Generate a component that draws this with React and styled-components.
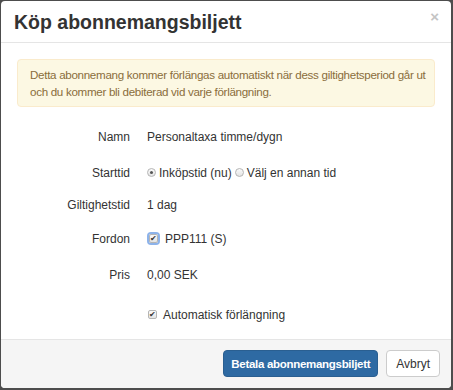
import styled, { createGlobalStyle } from 'styled-components';

const Global = createGlobalStyle`
  html, body {
    margin: 0;
    padding: 0;
    background: #4d4d4d;
    font-family: "Liberation Sans", Arial, sans-serif;
  }
`;

const Frame = styled.div`
  width: 453px;
  height: 390px;
  padding: 1px 2px 2px 1px;
  box-sizing: border-box;
`;

const Modal = styled.div`
  width: 450px;
  height: 387px;
  background: #fff;
  border-radius: 4px;
  overflow: hidden;
  display: flex;
  flex-direction: column;
`;

const Header = styled.div`
  height: 42px;
  padding: 2px 12px 0 13px;
  box-sizing: border-box;
  border-bottom: 1px solid #e5e5e5;
  display: flex;
  align-items: center;
  justify-content: space-between;
`;

const Title = styled.h4`
  margin: 0;
  font-size: 19.5px;
  font-weight: 700;
  color: #333;
`;

const Close = styled.span`
  font-size: 15px;
  font-weight: 700;
  color: #c4c4c4;
  margin-top: -11px;
`;

const Body = styled.div`
  flex: 1;
  padding: 16px 16px 0;
`;

const Alert = styled.div`
  background: #fcf8e3;
  border: 1px solid #faebcc;
  border-radius: 4px;
  color: #8a6d3b;
  font-size: 11.6px;
  letter-spacing: -0.3px;
  line-height: 17px;
  padding: 6px 6px 6px 12px;
  margin-bottom: 12px;
`;

const Row = styled.div`
  height: ${p => p.h}px;
  display: flex;
  align-items: center;
  font-size: 12px;
  color: #333;
`;

const Label = styled.div`
  width: 113px;
  text-align: right;
  padding-right: 17px;
`;

const Value = styled.div`
  display: flex;
  align-items: center;
`;

const Radio = styled.span`
  width: 9px;
  height: 9px;
  border-radius: 50%;
  border: 1px solid #b5b5b5;
  background: linear-gradient(#fafafa, #e4e4e4);
  box-sizing: border-box;
  display: inline-flex;
  align-items: center;
  justify-content: center;
  margin: 0 3px 0 ${p => (p.checked ? 0 : 3)}px;
  &::after {
    content: '';
    width: 3px;
    height: 3px;
    border-radius: 50%;
    background: ${p => (p.checked ? '#555' : 'transparent')};
  }
`;

const Check = styled.span`
  width: 9px;
  height: 9px;
  border: 1px solid #b5b5b5;
  border-radius: 2px;
  background: linear-gradient(#fafafa, #e4e4e4);
  box-sizing: border-box;
  display: inline-flex;
  align-items: center;
  justify-content: center;
  font-size: 8px;
  line-height: 1;
  color: #333;
  margin: ${p => (p.focus ? '0 7px 0 2px' : '0 6px 0 1px')};
  box-shadow: ${p => (p.focus ? '0 0 0 2px #8db3ea' : 'none')};
`;

const Footer = styled.div`
  height: 49px;
  background: #f5f5f5;
  border-top: 1px solid #e5e5e5;
  display: flex;
  align-items: center;
  justify-content: flex-end;
  gap: 8px;
  padding: 0 11px 0 0;
`;

const Button = styled.button`
  height: 27px;
  padding: 0 ${p => (p.primary ? 7 : 9)}px;
  font-family: inherit;
  font-size: ${p => (p.primary ? 11.5 : 12)}px;
  font-weight: ${p => (p.primary ? 700 : 400)};
  letter-spacing: ${p => (p.primary ? '-0.3px' : '0')};
  border-radius: 4px;
  border: 1px solid ${p => (p.primary ? '#2a5f91' : '#ccc')};
  background: ${p => (p.primary ? '#2e6aa3' : '#fff')};
  color: ${p => (p.primary ? '#fff' : '#333')};
`;

export default function App() {
  return (
    <Frame>
      <Global />
      <Modal>
        <Header>
          <Title>Köp abonnemangsbiljett</Title>
          <Close>×</Close>
        </Header>
        <Body>
          <Alert>
            Detta abonnemang kommer förlängas automatiskt när dess giltighetsperiod går ut och du
            kommer bli debiterad vid varje förlängning.
          </Alert>
          <Row h={36}>
            <Label>Namn</Label>
            <Value>Personaltaxa timme/dygn</Value>
          </Row>
          <Row h={36}>
            <Label>Starttid</Label>
            <Value>
              <Radio checked />
              Inköpstid (nu)
              <Radio />
              Välj en annan tid
            </Value>
          </Row>
          <Row h={28}>
            <Label>Giltighetstid</Label>
            <Value>1 dag</Value>
          </Row>
          <Row h={40}>
            <Label>Fordon</Label>
            <Value>
              <Check focus>✔</Check>
              PPP111 (S)
            </Value>
          </Row>
          <Row h={32}>
            <Label>Pris</Label>
            <Value>0,00 SEK</Value>
          </Row>
          <Row h={48}>
            <Label />
            <Value>
              <Check>✔</Check>
              Automatisk förlängning
            </Value>
          </Row>
        </Body>
        <Footer>
          <Button primary>Betala abonnemangsbiljett</Button>
          <Button>Avbryt</Button>
        </Footer>
      </Modal>
    </Frame>
  );
}
